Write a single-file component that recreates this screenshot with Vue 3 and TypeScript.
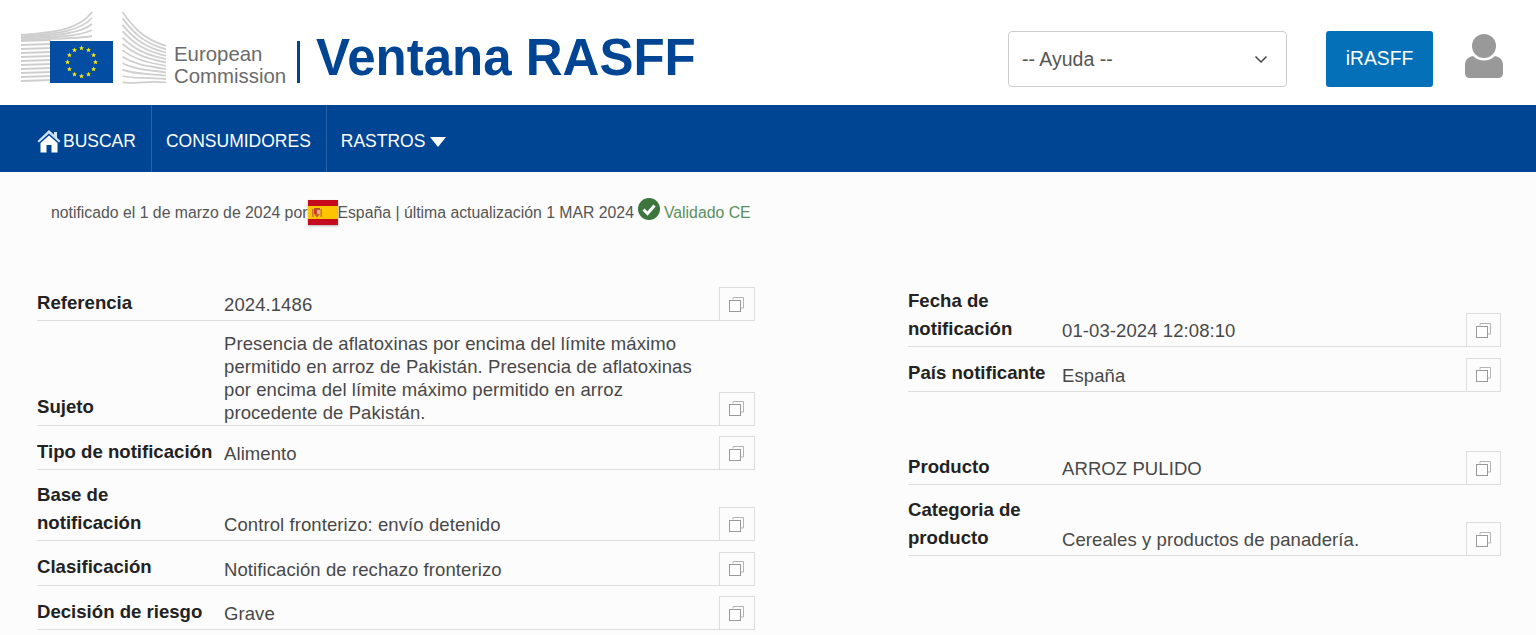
<script setup lang="ts">
interface Row {
  label: string
  value: string
}

const leftGroups: Row[][] = [
  [
    { label: 'Referencia', value: '2024.1486' },
    {
      label: 'Sujeto',
      value:
        'Presencia de aflatoxinas por encima del límite máximo permitido en arroz de Pakistán. Presencia de aflatoxinas por encima del límite máximo permitido en arroz procedente de Pakistán.',
    },
    { label: 'Tipo de notificación', value: 'Alimento' },
    { label: 'Base de notificación', value: 'Control fronterizo: envío detenido' },
    { label: 'Clasificación', value: 'Notificación de rechazo fronterizo' },
    { label: 'Decisión de riesgo', value: 'Grave' },
  ],
]

const rightGroups: Row[][] = [
  [
    { label: 'Fecha de notificación', value: '01-03-2024 12:08:10' },
    { label: 'País notificante', value: 'España' },
  ],
  [
    { label: 'Producto', value: 'ARROZ PULIDO' },
    { label: 'Categoria de producto', value: 'Cereales y productos de panadería.' },
  ],
]

const columns = [
  { name: 'col-left', groups: leftGroups },
  { name: 'col-right', groups: rightGroups },
]

const stars = Array.from({ length: 12 }, (_, i) => {
  const a = (i * Math.PI) / 6
  return { x: 81.5 + 14 * Math.sin(a), y: 62 - 14 * Math.cos(a) }
})
const leftStripes = [37, 41, 45, 49, 53, 57, 61, 65, 69, 73, 77, 81]
const curveStripes = [0, 1, 2, 3, 4]
const rightStripes = [0, 1, 2, 3, 4, 5, 6, 7, 8, 9, 10, 11]
</script>

<template>
  <div class="page">
    <header class="top">
      <div class="brand">
        <svg class="ec-logo" width="146" height="84" viewBox="20 0 146 84">
          <g stroke="#cfcfcf" stroke-width="1.8" fill="none">
            <path v-for="y in leftStripes" :key="y" :d="`M21 ${y} L51 ${y - 1}`" />
            <path
              v-for="i in curveStripes"
              :key="i"
              :d="`M21 ${35 + i * 1.3} C52 ${32 + i * 1.6} 78 ${31 + i * 2} 92 ${12 + i * 6}`"
            />
          </g>
          <rect x="50" y="41" width="63" height="42" fill="#034ea2" />
          <path
            v-for="(s, i) in stars"
            :key="i"
            :d="`M${s.x} ${s.y - 2.4}l.7 1.7 1.8.1-1.4 1.1.5 1.8-1.6-1-1.6 1 .5-1.8-1.4-1.1 1.8-.1z`"
            fill="#ffed00"
          />
          <g stroke="#cfcfcf" stroke-width="1.8" fill="none">
            <path
              v-for="i in rightStripes"
              :key="i"
              :d="`M122.5 ${12 + i * 6.4} C133 ${27 + i * 5.2} 143 ${39 + i * 3.8} 166 ${46 + i * 3.3}`"
            />
          </g>
        </svg>
        <div class="ec-name">European<br />Commission</div>
        <div class="divider"></div>
        <div class="title">Ventana RASFF</div>
      </div>
      <div class="top-actions">
        <div class="help-select">
          <span>-- Ayuda --</span>
          <svg width="14" height="9" viewBox="0 0 14 9">
            <path d="M1.5 1.5 7 7l5.5-5.5" fill="none" stroke="#444" stroke-width="1.5" />
          </svg>
        </div>
        <button class="irasff">iRASFF</button>
        <svg class="user" width="38" height="45" viewBox="0 0 38 45">
          <circle cx="19" cy="13" r="12" fill="#999" />
          <path
            d="M8 23c3 3 7 4.5 11 4.5s8-1.5 11-4.5c5 1 8 4 8 9v8c0 3-2 5-5 5H5c-3 0-5-2-5-5v-8c0-5 3-8 8-9z"
            fill="#999"
          />
        </svg>
      </div>
    </header>

    <nav class="nav">
      <a class="nav-item first">
        <svg class="home" width="24" height="24" viewBox="0 0 24 24">
          <path d="M12 1 .5 12 2 13.5 12 4.5 22 13.5 23.5 12 20 8.7V3h-3v2.8z" fill="#cfe3f5" />
          <path d="M12 6.5 3.5 14v9.5h6V16h5v7.5h6V14z" fill="#fff" />
        </svg>
        BUSCAR
      </a>
      <a class="nav-item">CONSUMIDORES</a>
      <a class="nav-item">
        RASTROS
        <svg class="caret" width="16" height="10" viewBox="0 0 16 10"><path d="M0 0h16L8 10z" fill="#fff" /></svg>
      </a>
    </nav>

    <main class="content">
      <p class="status">
        notificado el 1 de marzo de 2024 por
        <svg class="flag" width="30" height="25" viewBox="0 0 30 25">
          <rect width="30" height="25" fill="#c60b1e" />
          <rect y="6" width="30" height="13" fill="#ffc400" />
          <path d="M4 9h1.5v8H4zM12.5 9H14v8h-1.500z" fill="#c8743a" />
          <path d="M6 8h6v2H6z" fill="#b5502a" />
          <path d="M6 10h3v4H6z" fill="#c9402a" />
          <path d="M9 10h3v4H9z" fill="#e0b090" />
          <path d="M6 14h6l-3 3.5z" fill="#c9602a" />
        </svg>
        España | última actualización 1 MAR 2024
        <svg class="check" width="22" height="22" viewBox="0 0 22 22">
          <circle cx="11" cy="11" r="11" fill="#3c763d" />
          <path d="M5.5 11.5 9.5 15.5 16.5 7.500" fill="none" stroke="#fff" stroke-width="3" />
        </svg>
        <span class="valid">Validado CE</span>
      </p>

      <div class="columns">
        <section v-for="col in columns" :key="col.name" :class="col.name">
          <div v-for="(group, g) in col.groups" :key="g" class="group">
            <div v-for="row in group" :key="row.label" class="row">
              <div class="label">{{ row.label }}</div>
              <div class="value" :class="{ long: row.value.length > 60 }">{{ row.value }}</div>
              <button class="copy" aria-label="Copiar">
                <svg width="17" height="17" viewBox="0 0 17 17">
                  <path d="M5 3.5V1.5h10.5V12H13" fill="none" stroke="#b5b5b5" />
                  <rect x="1.5" y="4.5" width="11" height="11" fill="#fff" stroke="#999" />
                </svg>
              </button>
            </div>
          </div>
        </section>
      </div>
    </main>
  </div>
</template>

<style>
html,
body {
  margin: 0;
  background: #fcfcfc;
  overflow: hidden;
}
</style>

<style scoped>
.page {
  font-family: 'Liberation Sans', Arial, sans-serif;
  color: #484848;
  height: 635px;
  overflow: hidden;
}

.top {
  height: 105px;
  background: #fff;
  display: flex;
  justify-content: space-between;
  align-items: flex-start;
  box-sizing: border-box;
  padding-left: 20px;
}

.brand {
  display: flex;
  align-items: flex-start;
}

.ec-logo {
  display: block;
}

.ec-name {
  margin: 43px 0 0 8px;
  font-size: 20.4px;
  line-height: 22px;
  color: #6b6b6b;
  width: 114px;
}

.divider {
  width: 3px;
  height: 42px;
  background: #004494;
  margin: 41px 0 0 9px;
}

.title {
  margin: 29px 0 0 16px;
  font-size: 51px;
  line-height: 58px;
  font-weight: 700;
  color: #004494;
}

.top-actions {
  display: flex;
  align-items: center;
  margin-top: 31px;
  padding-right: 33px;
}

.help-select {
  width: 279px;
  height: 56px;
  box-sizing: border-box;
  border: 1px solid #ccc;
  border-radius: 4px;
  background: #fff;
  display: flex;
  align-items: center;
  justify-content: space-between;
  padding: 0 18px 0 13px;
  font-size: 19.5px;
  color: #555;
}

.irasff {
  width: 107px;
  height: 56px;
  margin-left: 39px;
  border: none;
  border-radius: 3px;
  background: #0470b8;
  color: #fff;
  font: inherit;
  font-size: 19.3px;
}

.user {
  margin: -7px 0 0 32px;
}

.nav {
  height: 67px;
  box-sizing: border-box;
  background: #004494;
  display: flex;
  padding-left: 22px;
}

.nav-item {
  display: flex;
  align-items: center;
  gap: 3px;
  padding: 5px 15px 0;
  color: #fff;
  font-size: 17.5px;
  border-right: 1px solid #2a62a6;
}

.nav-item:last-child {
  border-right: none;
  gap: 5px;
  padding-left: 14px;
}

.nav-item.first {
  gap: 2px;
  padding-right: 15px;
}

.nav-item.first + .nav-item {
  padding-left: 14px;
}

.home {
  margin-top: -1px;
}

.caret {
  margin-top: 2px;
}

.content {
  padding: 0 35px 0 37px;
}

.status {
  margin: 0;
  padding: 28px 0 0 14px;
  height: 115px;
  box-sizing: border-box;
  font-size: 15.8px;
  line-height: 26px;
  white-space: nowrap;
  display: flex;
  align-items: flex-start;
  color: #555;
}

.flag {
  box-shadow: 0 1px 2px rgba(0, 0, 0, 0.3);
  margin: 0 -1px 0 1px;
}

.check {
  margin: -2px 4px 0;
}

.valid {
  color: #5a8f5b;
}

.columns {
  display: grid;
  grid-template-columns: 717.5px 593px;
  column-gap: 153.5px;
}

.col-right {
  display: flex;
  flex-direction: column;
  gap: 49px;
  margin-top: -0.5px;
}

.row {
  display: grid;
  grid-template-columns: 187px 1fr 35.5px;
  align-items: end;
  border-bottom: 1px solid #dedede;
  margin-bottom: 10.5px;
}

.col-right .row {
  grid-template-columns: 154px 1fr 35.5px;
}

.label {
  font-weight: 700;
  color: #222;
  font-size: 18.6px;
  line-height: 28px;
  padding: 0 9px 3.5px 0;
}

.value {
  font-size: 18.5px;
  letter-spacing: 0.09px;
  line-height: 23px;
  padding: 0 20px 4px 0;
}

.value.long {
  padding-bottom: 1px;
}

.copy {
  width: 35.5px;
  height: 33px;
  box-sizing: border-box;
  border: 1px solid #ddd;
  border-bottom: none;
  background: #fcfcfc;
  display: flex;
  align-items: center;
  justify-content: center;
  padding: 0;
}
</style>
